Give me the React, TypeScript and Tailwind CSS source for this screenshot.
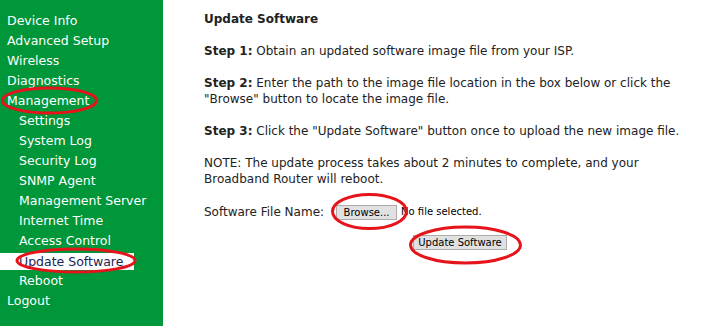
import React from "react";

const font = { fontFamily: '"DejaVu Sans", Verdana, sans-serif' };

interface NavItem {
    label: string;
    sub?: boolean;
    active?: boolean;
}

const navItems: NavItem[] = [
    { label: "Device Info" },
    { label: "Advanced Setup" },
    { label: "Wireless" },
    { label: "Diagnostics" },
    { label: "Management" },
    { label: "Settings", sub: true },
    { label: "System Log", sub: true },
    { label: "Security Log", sub: true },
    { label: "SNMP Agent", sub: true },
    { label: "Management Server", sub: true },
    { label: "Internet Time", sub: true },
    { label: "Access Control", sub: true },
    { label: "Update Software", sub: true, active: true },
    { label: "Reboot", sub: true },
    { label: "Logout" },
];

const Sidebar: React.FC = () => (
    <nav className="w-[163px] shrink-0 bg-[#00963a] pt-[10px] text-[12.5px] text-white">
        {navItems.map((item) =>
            item.active ? (
                <div key={item.label} className="h-[20px] flex items-center">
                    <div className="w-[134px] h-[17px] mt-[2px] bg-white pl-[19px] leading-[17px] text-[#1b2556] whitespace-nowrap">
                        {item.label}
                    </div>
                </div>
            ) : (
                <div
                    key={item.label}
                    className={`h-[20px] leading-[22px] whitespace-nowrap ${item.sub ? "pl-[19px]" : "pl-[7px]"}`}
                >
                    {item.label}
                </div>
            )
        )}
    </nav>
);

export default function App() {
    return (
        <div className="relative flex w-[713px] h-[326px] bg-white overflow-hidden" style={font}>
            <Sidebar />

            <main className="pl-[41px] pt-[11px] text-[12px] leading-[16px] text-[#222] whitespace-nowrap">
                <p className="font-bold mb-4">Update Software</p>
                <p className="mb-4">
                    <b>Step 1:</b> Obtain an updated software image file from your ISP.
                </p>
                <p className="mb-4">
                    <b>Step 2:</b> Enter the path to the image file location in the box below or click the
                    <br />
                    "Browse" button to locate the image file.
                </p>
                <p className="mb-4">
                    <b>Step 3:</b> Click the "Update Software" button once to upload the new image file.
                </p>
                <p className="mb-4">
                    NOTE: The update process takes about 2 minutes to complete, and your
                    <br />
                    Broadband Router will reboot.
                </p>

                {/* file picker */}
                <div className="flex items-center h-[18px]">
                    <span>Software File Name:</span>
                    <button className="ml-[12px] w-[61px] h-[15px] bg-[#e1e1e1] border border-[#adadad] text-[10px] leading-[13px] text-black">
                        Browse...
                    </button>
                    <span className="ml-[4px] text-[10px] text-black">No file selected.</span>
                </div>

                <button className="mt-[14px] ml-[209px] w-[94px] h-[15px] bg-[#e1e1e1] border border-[#adadad] text-[10px] leading-[13px] text-black">
                    Update Software
                </button>
            </main>

            {/* red annotation marks */}
            <svg className="absolute inset-0 pointer-events-none" width="713" height="326">
                <g fill="none" stroke="#e5141b" strokeWidth="3">
                    <ellipse cx="49.5" cy="100.5" rx="47" ry="12.5" />
                    <ellipse cx="76" cy="260.5" rx="59" ry="11.5" />
                    <ellipse cx="369.5" cy="211.5" rx="37" ry="17" />
                    <ellipse cx="465.5" cy="245" rx="55" ry="18" />
                </g>
            </svg>
        </div>
    );
}
